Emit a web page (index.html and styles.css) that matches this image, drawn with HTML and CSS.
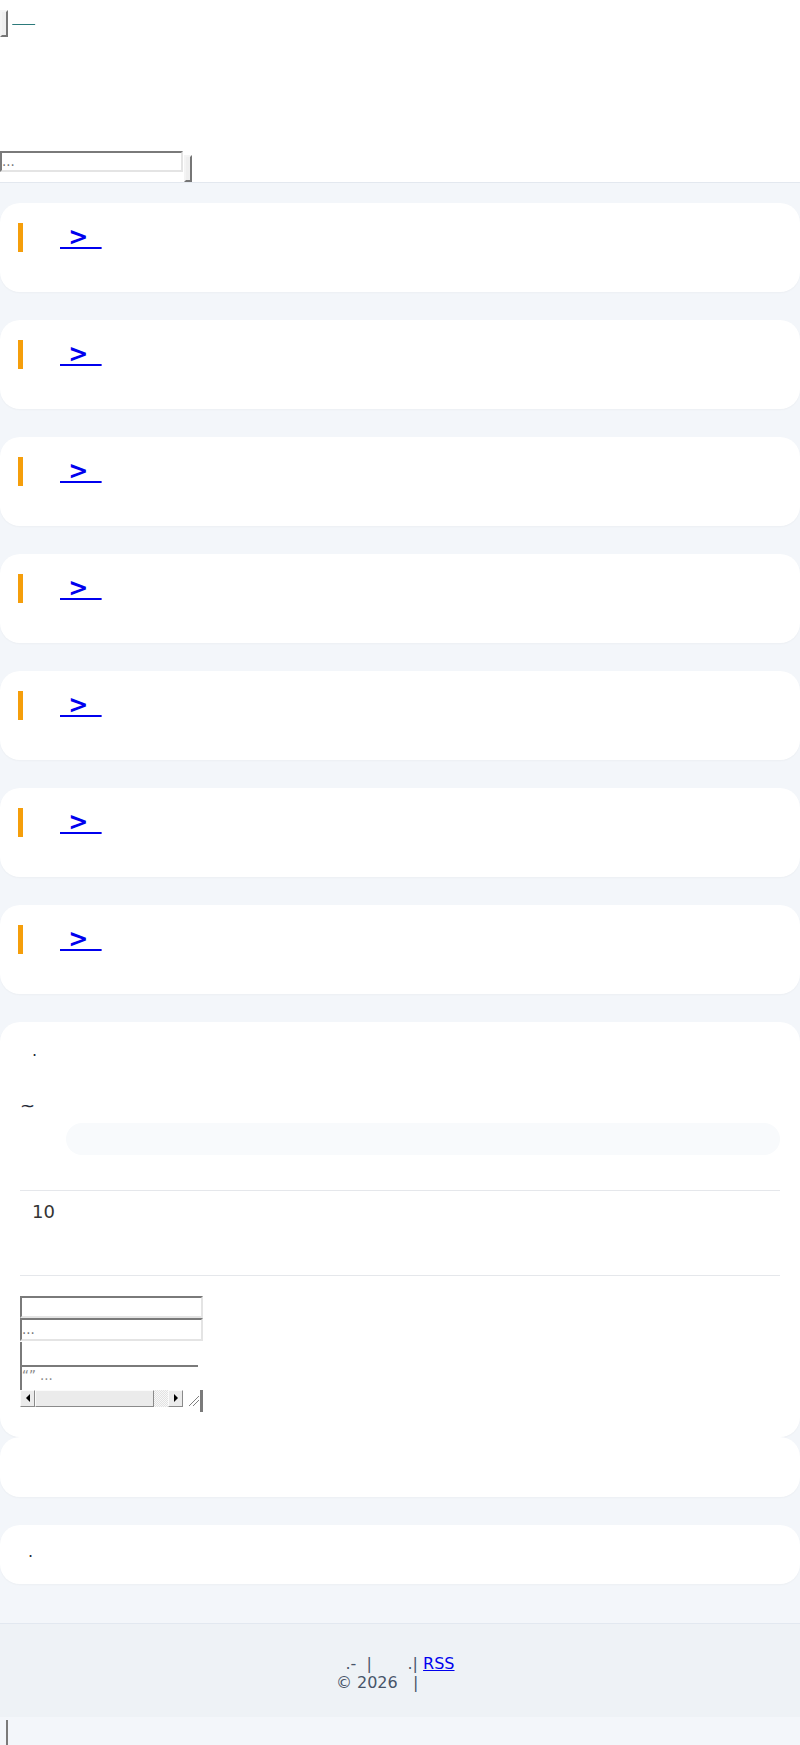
FILE: index.html
```html
<!DOCTYPE html>
<html lang="zh">
<head>
<meta charset="utf-8">
<title>博客</title>
<link rel="stylesheet" href="styles.css">
</head>
<body>
<header class="site-header">
  <div class="topbar">
    <button class="btn" type="button">&nbsp;</button>
    <a class="brand" href="#">&nbsp;&nbsp;&nbsp;&nbsp;</a>
  </div>
  <form class="search">
    <input class="field" type="text" placeholder="...">
    <button class="btn search-btn" type="submit">&nbsp;</button>
  </form>
</header>

<main class="content">
  <article class="card post"><h2 class="post-title"><span class="mark"></span><a href="#">&nbsp;&gt;&nbsp;&#8201;</a></h2></article>
  <article class="card post"><h2 class="post-title"><span class="mark"></span><a href="#">&nbsp;&gt;&nbsp;&#8201;</a></h2></article>
  <article class="card post"><h2 class="post-title"><span class="mark"></span><a href="#">&nbsp;&gt;&nbsp;&#8201;</a></h2></article>
  <article class="card post"><h2 class="post-title"><span class="mark"></span><a href="#">&nbsp;&gt;&nbsp;&#8201;</a></h2></article>
  <article class="card post"><h2 class="post-title"><span class="mark"></span><a href="#">&nbsp;&gt;&nbsp;&#8201;</a></h2></article>
  <article class="card post"><h2 class="post-title"><span class="mark"></span><a href="#">&nbsp;&gt;&nbsp;&#8201;</a></h2></article>
  <article class="card post"><h2 class="post-title"><span class="mark"></span><a href="#">&nbsp;&gt;&nbsp;&#8201;</a></h2></article>

  <section class="card widget">
    <p class="w-head">.</p>
    <p class="w-range">~</p>
    <div class="w-bar"></div>
    <hr class="w-rule">
    <p class="w-count">10</p>
    <hr class="w-rule w-rule-low">
    <form class="comment">
      <input class="field cfield" type="text">
      <input class="field cfield" type="text" placeholder="...">
      <div class="ta-field">
        <div class="ta-inner">“”&nbsp;...</div>
      </div>
      <div class="ta-scroll">
        <span class="sb-btn"><span class="tri-left"></span></span>
        <span class="sb-thumb"></span>
        <span class="sb-track"></span>
        <span class="sb-btn"><span class="tri-right"></span></span>
        <span class="sb-grip"><svg width="17" height="17" viewBox="0 0 17 17"><path d="M6 16 L16 6 M10 16 L16 10" stroke="#808080" stroke-width="1"/></svg></span>
        <span class="sb-edge"></span>
      </div>
    </form>
  </section>
  <section class="card blank"></section>
  <section class="card note"><p>.</p></section>
</main>

<footer class="site-footer">
  <p class="foot-line">.-  |       .| <a href="#">RSS</a></p>
  <p class="foot-line">© 2026   |         </p>
</footer>
<div class="tail"></div>
</body>
</html>
```

FILE: styles.css
```css
* { box-sizing: border-box; }
html { background: #f3f6fa; }
body {
  margin: 0;
  font-family: "DejaVu Sans", sans-serif;
  font-size: 16px;
  color: #1f2937;
  background: #f3f6fa;
}

/* header */
.site-header {
  background: #fff;
  border-bottom: 1px solid #e3e8ef;
  padding-top: 10px;
}
.topbar {
  display: flex;
  align-items: flex-start;
  height: 27px;
  gap: 4px;
}
.btn {
  display: block;
  height: 27px;
  padding: 0;
  margin: 0;
  font: 13.33px "DejaVu Sans", sans-serif;
  color: #000;
  background: #efefef;
  border: 2px solid;
  border-color: #f4f4f4 #767676 #767676 #f4f4f4;
}
.brand {
  color: #2c7a7b;
  font-size: 18px;
  line-height: 10px;
  margin-top: 2px;
}
.search {
  display: flex;
  align-items: flex-start;
  margin: 114px 0 0;
  height: 31px;
}
.field {
  display: block;
  width: 183px;
  height: 21px;
  padding: 1px 0;
  margin: 0;
  font: 13.33px "DejaVu Sans", sans-serif;
  color: #000;
  background: #fff;
  border: 2px solid;
  border-color: #7a7a7a #e4e4e4 #e4e4e4 #7a7a7a;
}
.field::placeholder { color: #757575; }
.search-btn { margin: 4px 0 0 1px; }

/* main */
.content { padding: 20px 0 11px; }
.card {
  background: #fff;
  border-radius: 20px;
  margin-bottom: 28px;
  box-shadow: 0 1px 2px rgba(15, 23, 42, 0.03);
}
.post { height: 89px; padding: 20px 18px; }
.post-title {
  margin: 0;
  display: flex;
  align-items: center;
  height: 29px;
  font-size: 24px;
  font-weight: bold;
}
.mark {
  width: 5px;
  height: 29px;
  background: #f59e0b;
  margin-right: 37px;
}
.post-title a { color: #0000ee; line-height: 29px; }

/* widget card */
.widget { padding: 20px 20px 25px; margin-bottom: 0; }
.widget p { margin: 0; }
.w-head { padding-left: 12px; line-height: 18.6px; }
.widget .w-range { margin: 34px 0 0 0; font-size: 18px; }
.w-bar {
  margin: 7px 0 0 46px;
  height: 32px;
  border-radius: 16px;
  background: #f8fafc;
}
.w-rule { border: 0; border-top: 1px solid #e5e7eb; margin: 35px 0 0; height: 0; }
.w-rule-low { margin-top: 53px; }
.widget .w-count { margin: 10px 0 0 12px; font-size: 18px; color: #333; }

.comment { margin-top: 20px; }
.cfield { height: 22.5px; }
.ta-field {
  width: 183px;
  height: 48px;
  margin-top: 1px;
  border-left: 2px solid #7a7a7a;
  padding-top: 23px;
}
.ta-inner {
  width: 176px;
  height: 25px;
  padding-top: 2px;
  border-top: 2px solid #7a7a7a;
  font-size: 13.33px;
  line-height: 14px;
  color: #8a8a8a;
  white-space: nowrap;
}
.ta-scroll { display: flex; align-items: flex-start; }
.sb-btn, .sb-thumb {
  height: 17px;
  background: #ebebeb;
  border: 1px solid;
  border-color: #fbfbfb #8a8a8a #8a8a8a #fbfbfb;
  display: flex;
  align-items: center;
  justify-content: center;
}
.sb-btn { width: 15px; }
.sb-thumb { width: 119px; }
.sb-track {
  width: 14px;
  height: 17px;
  background: repeating-conic-gradient(#e2e2e2 0 25%, #f8f8f8 0 50%) 0 0 / 2px 2px;
}
.tri-left {
  width: 0; height: 0;
  border-top: 4px solid transparent;
  border-bottom: 4px solid transparent;
  border-right: 4px solid #000;
}
.tri-right {
  width: 0; height: 0;
  border-top: 4px solid transparent;
  border-bottom: 4px solid transparent;
  border-left: 4px solid #000;
}
.sb-grip { width: 17px; height: 17px; display: block; }
.sb-grip svg { display: block; }
.sb-edge { width: 3px; height: 22px; background: #7a7a7a; }

.blank { height: 60px; }
.note { height: 59px; padding: 17px 0 0 28px; }
.note p { margin: 0; }

/* footer */
.site-footer {
  background: #eef2f6;
  border-top: 1px solid #e2e8f0;
  padding: 30px 0 25px;
  text-align: center;
  color: #475569;
}
.foot-line { margin: 0; white-space: pre; }
.site-footer a { color: #0000ee; }
.tail {
  margin: 3px 0 0 6px;
  width: 20px;
  height: 40px;
  border-left: 2px solid #7a7a7a;
}
```
